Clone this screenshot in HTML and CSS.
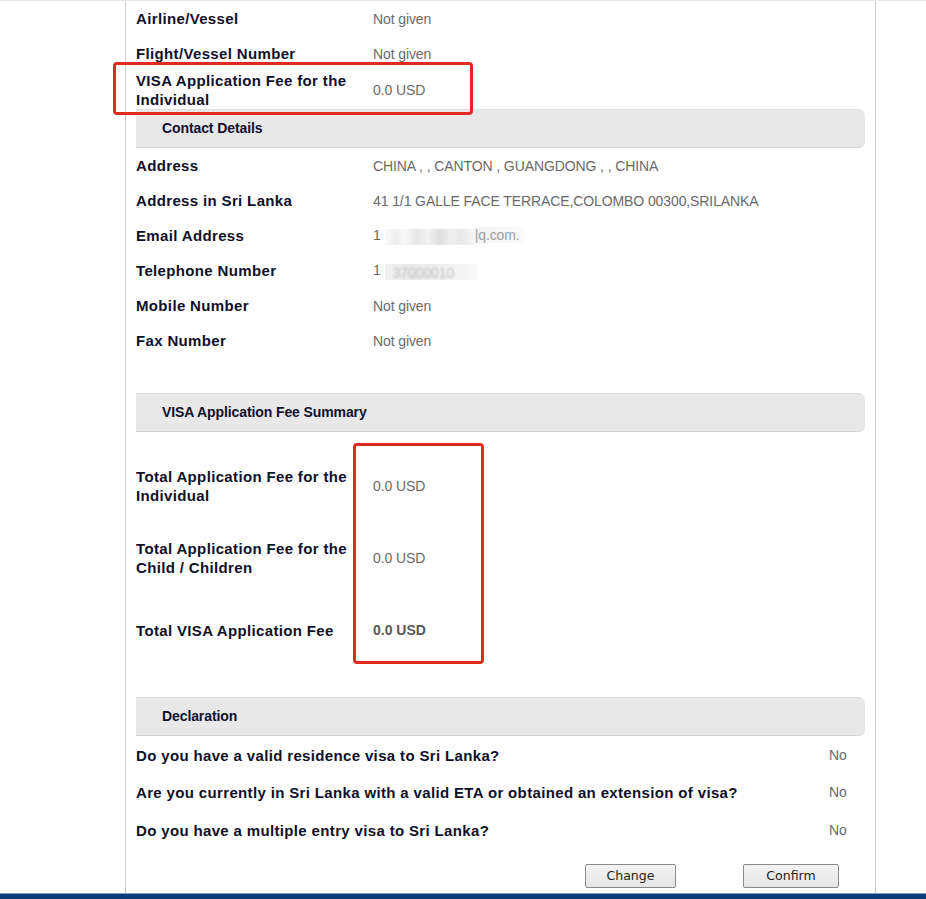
FILE: index.html
```html
<!DOCTYPE html>
<html>
<head>
<meta charset="utf-8">
<link rel="stylesheet" href="styles.css">
</head>
<body>
<div class="topline"></div>
<div class="page">
  <div class="row"><div class="label">Airline/Vessel</div><div class="value">Not given</div></div>
  <div class="row"><div class="label">Flight/Vessel Number</div><div class="value">Not given</div></div>
  <div class="row row-tall"><div class="label">VISA Application Fee for the Individual</div><div class="value">0.0 USD</div></div>

  <div class="section-head">Contact Details</div>
  <div class="row"><div class="label">Address</div><div class="value">CHINA , , CANTON , GUANGDONG , , CHINA</div></div>
  <div class="row"><div class="label">Address in Sri Lanka</div><div class="value">41 1/1 GALLE FACE TERRACE,COLOMBO 00300,SRILANKA</div></div>
  <div class="row"><div class="label">Email Address</div><div class="value">1<span class="blur blur-email"></span><span class="faded">|q.com.</span></div></div>
  <div class="row"><div class="label">Telephone Number</div><div class="value">1<span class="blur blur-tel"><span class="blurtext">37000010</span></span></div></div>
  <div class="row"><div class="label">Mobile Number</div><div class="value">Not given</div></div>
  <div class="row"><div class="label">Fax Number</div><div class="value">Not given</div></div>

  <div class="section-head spaced">VISA Application Fee Summary</div>
  <div class="fee-block">
    <div class="row fee-row"><div class="label">Total Application Fee for the Individual</div><div class="value">0.0 USD</div></div>
    <div class="row fee-row"><div class="label">Total Application Fee for the Child / Children</div><div class="value">0.0 USD</div></div>
    <div class="row fee-row"><div class="label">Total VISA Application Fee</div><div class="value total">0.0 USD</div></div>
  </div>

  <div class="section-head">Declaration</div>
  <div class="decl-row"><div class="question">Do you have a valid residence visa to Sri Lanka?</div><div class="answer">No</div></div>
  <div class="decl-row"><div class="question">Are you currently in Sri Lanka with a valid ETA or obtained an extension of visa?</div><div class="answer">No</div></div>
  <div class="decl-row"><div class="question">Do you have a multiple entry visa to Sri Lanka?</div><div class="answer">No</div></div>

  <div class="actions">
    <button class="btn btn-change" type="button">Change</button>
    <button class="btn btn-confirm" type="button">Confirm</button>
  </div>
</div>
<div class="bottombar"></div>

<div class="mark mark-one"></div>
<div class="mark mark-two"></div>
</body>
</html>
```

FILE: styles.css
```css
html, body {
  margin: 0;
  padding: 0;
  background: #ffffff;
}
body {
  position: relative;
  font-family: "Liberation Sans", Arial, sans-serif;
  font-size: 14px;
  color: #11112e;
  height: 899px;
  overflow: hidden;
}
.topline {
  height: 1px;
  background: #e6e6e6;
}
.page {
  margin-left: 125px;
  width: 729px;
  padding: 0 10px;
  border-left: 1px solid #d0d0d0;
  border-right: 1px solid #d0d0d0;
  height: 892px;
  box-sizing: content-box;
}
.row {
  display: flex;
  align-items: center;
  height: 35px;
}
.row-tall {
  height: 38px;
}
.label {
  width: 225px;
  padding-right: 12px;
  flex: none;
  font-weight: bold;
  font-size: 15px;
  letter-spacing: 0.35px;
  line-height: 19px;
  color: #0f0f2a;
}
.value {
  color: #6a6a6a;
  line-height: 18px;
  letter-spacing: -0.1px;
}
.value.total {
  font-weight: bold;
  color: #585858;
  letter-spacing: 0;
}
.blur {
  display: inline-block;
  vertical-align: middle;
  height: 16px;
}
.blur-email {
  width: 90px;
  background: linear-gradient(90deg, #fbfbfb 0%, #eeeeee 12%, #f7f7f7 22%, #e6e6e6 35%, #f2f2f2 48%, #dedede 60%, #eeeeee 72%, #e9e9e9 85%, #f6f6f6 100%);
  margin-left: 4px;
}
.faded {
  color: #a0a0a0;
  background: linear-gradient(90deg, #f3f3f3, #fafafa);
  padding-right: 4px;
}
.blur-tel {
  width: 92px;
  margin-left: 4px;
  background: linear-gradient(90deg, #f2f2f2 0%, #e8e8e8 30%, #efefef 60%, #f7f7f7 100%);
  overflow: hidden;
}
.blurtext {
  display: inline-block;
  color: #c4c4c4;
  filter: blur(1.2px);
  padding-left: 8px;
  line-height: 16px;
}
.section-head {
  height: 37px;
  line-height: 37px;
  padding-left: 26px;
  background: #e8e8e8;
  border-top: 1px solid #e0e0e0;
  border-bottom: 1px solid #d2d2d2;
  border-radius: 0 7px 7px 0;
  font-weight: bold;
  font-size: 14px;
  letter-spacing: -0.1px;
  color: #11112e;
}
.section-head.spaced {
  margin-top: 35px;
}
.fee-block {
  padding-top: 18px;
  padding-bottom: 31px;
}
.fee-row {
  height: 72px;
}
.decl-row {
  display: flex;
  align-items: center;
  height: 37.6px;
}
.question {
  flex: 1;
  font-weight: bold;
  font-size: 15px;
  letter-spacing: 0.35px;
  color: #0f0f2a;
  padding-top: 1px;
}
.answer {
  width: 36px;
  flex: none;
  color: #6a6a6a;
}
.actions {
  display: flex;
  margin-top: 15px;
  padding-left: 449px;
  gap: 67px;
}
.btn {
  height: 24px;
  padding: 0;
  font-family: "DejaVu Sans", "Liberation Sans", sans-serif;
  font-size: 12.5px;
  color: #222;
  background: linear-gradient(#f4f4f4, #e4e4e4);
  border: 1px solid #8a8a8a;
  border-radius: 2px;
}
.btn-change {
  width: 91px;
}
.btn-confirm {
  width: 96px;
}
.bottombar {
  height: 5px;
  background: #0b3d7a;
  border-top: 1px solid #6d9fd4;
}
.mark {
  position: absolute;
  border: 3px solid #e22b20;
  border-radius: 4px;
  box-sizing: border-box;
}
.mark-one {
  left: 113px;
  top: 62px;
  width: 360px;
  height: 53px;
}
.mark-two {
  left: 353px;
  top: 443px;
  width: 131px;
  height: 221px;
}
```
